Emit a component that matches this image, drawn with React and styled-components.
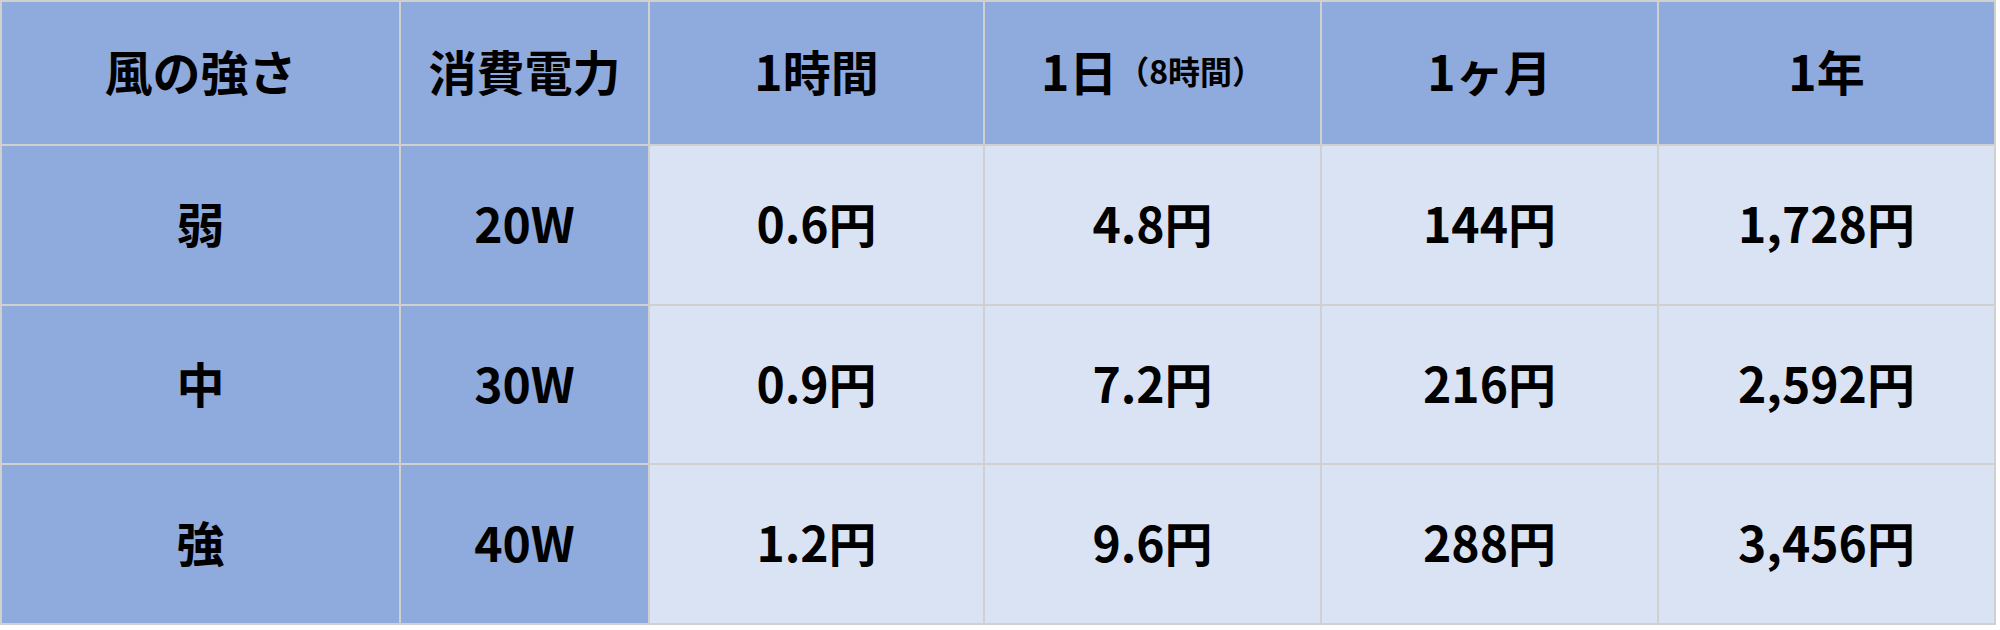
import React from "react"
import styled, { createGlobalStyle } from "styled-components"

const GlobalStyle = createGlobalStyle`
  html, body {
    margin: 0;
    padding: 0;
    background: #ffffff;
  }
  body {
    font-family: "Noto Sans CJK JP", "Noto Sans", sans-serif;
  }
`

const Grid = styled.div`
  display: grid;
  grid-template-columns: 397px 247px 333px 335px 335px 335px;
  grid-template-rows: 142px 158px 157px 158px;
  gap: 2px;
  padding: 2px;
  width: max-content;
  background: #d0d0d0;
`

const Cell = styled.div`
  display: flex;
  align-items: center;
  justify-content: center;
  padding-bottom: 6px;
  background: ${({ $light }) => ($light ? "#dae3f3" : "#8faadc")};
  color: #000000;
  font-family: "Noto Sans CJK JP", "Noto Sans", sans-serif;
  font-weight: 700;
  font-size: 48px;
  line-height: 1;
  white-space: nowrap;
`

const Small = styled.span`
  font-size: 32px;
  font-weight: 700;
`

const headers = [
  "風の強さ",
  "消費電力",
  "1時間",
  <>
    1日<Small>（8時間）</Small>
  </>,
  "1ヶ月",
  "1年",
]

const rows = [
  ["弱", "20W", "0.6円", "4.8円", "144円", "1,728円"],
  ["中", "30W", "0.9円", "7.2円", "216円", "2,592円"],
  ["強", "40W", "1.2円", "9.6円", "288円", "3,456円"],
]

const App = () => {
  return (
    <>
      <GlobalStyle />
      <Grid>
        {headers.map((h, i) => (
          <Cell key={"h" + i}>{h}</Cell>
        ))}
        {rows.map((row, r) =>
          row.map((value, c) => (
            <Cell key={r + "-" + c} $light={c >= 2}>
              {value}
            </Cell>
          ))
        )}
      </Grid>
    </>
  )
}

export default App
